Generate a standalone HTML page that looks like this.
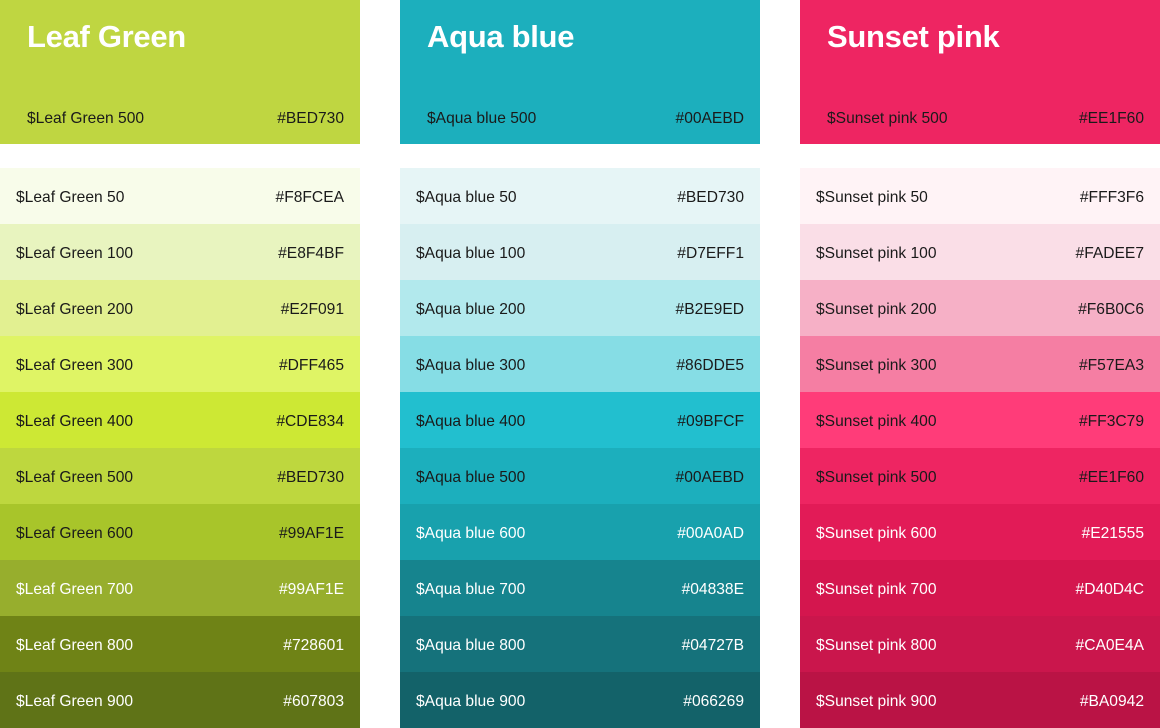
<!DOCTYPE html>
<html><head><meta charset="utf-8"><style>
*{margin:0;padding:0;box-sizing:border-box}
body{width:1160px;height:728px;background:#fff;font-family:"Liberation Sans",Arial,sans-serif;position:relative;overflow:hidden}
.col{position:absolute;top:0;width:360px}
.head{height:144px;position:relative;color:#fff}
.head h1{position:absolute;left:27px;top:19px;font-size:31px;font-weight:bold;letter-spacing:-0.3px}
.head .l{position:absolute;left:27px;right:16px;top:110px;display:flex;justify-content:space-between;font-size:15.6px;color:#1a1a1a}
.rows{margin-top:24px}
.r{height:56px;display:flex;justify-content:space-between;align-items:center;padding:3px 16px 0;font-size:15.6px;color:#1a1a1a}
.w{color:#fff}
</style></head><body>
<div class="col" style="left:0">
<div class="head" style="background:#bfd641"><h1>Leaf Green</h1><div class="l"><span>$Leaf Green 500</span><span>#BED730</span></div></div>
<div class="rows">
<div class="r" style="background:#f8fcea"><span>$Leaf Green 50</span><span>#F8FCEA</span></div>
<div class="r" style="background:#e8f4bf"><span>$Leaf Green 100</span><span>#E8F4BF</span></div>
<div class="r" style="background:#e2f091"><span>$Leaf Green 200</span><span>#E2F091</span></div>
<div class="r" style="background:#dff465"><span>$Leaf Green 300</span><span>#DFF465</span></div>
<div class="r" style="background:#cde834"><span>$Leaf Green 400</span><span>#CDE834</span></div>
<div class="r" style="background:#bed73e"><span>$Leaf Green 500</span><span>#BED730</span></div>
<div class="r" style="background:#a8c52a"><span>$Leaf Green 600</span><span>#99AF1E</span></div>
<div class="r w" style="background:#97ae2d"><span>$Leaf Green 700</span><span>#99AF1E</span></div>
<div class="r w" style="background:#6f8316"><span>$Leaf Green 800</span><span>#728601</span></div>
<div class="r w" style="background:#5f7317"><span>$Leaf Green 900</span><span>#607803</span></div>
</div></div>
<div class="col" style="left:400px">
<div class="head" style="background:#1cafbd"><h1>Aqua blue</h1><div class="l"><span>$Aqua blue 500</span><span>#00AEBD</span></div></div>
<div class="rows">
<div class="r" style="background:#e6f5f6"><span>$Aqua blue 50</span><span>#BED730</span></div>
<div class="r" style="background:#d7eff1"><span>$Aqua blue 100</span><span>#D7EFF1</span></div>
<div class="r" style="background:#b2e9ed"><span>$Aqua blue 200</span><span>#B2E9ED</span></div>
<div class="r" style="background:#86dde5"><span>$Aqua blue 300</span><span>#86DDE5</span></div>
<div class="r" style="background:#22bfcf"><span>$Aqua blue 400</span><span>#09BFCF</span></div>
<div class="r" style="background:#1cafbd"><span>$Aqua blue 500</span><span>#00AEBD</span></div>
<div class="r w" style="background:#18a1ad"><span>$Aqua blue 600</span><span>#00A0AD</span></div>
<div class="r w" style="background:#16848e"><span>$Aqua blue 700</span><span>#04838E</span></div>
<div class="r w" style="background:#15727b"><span>$Aqua blue 800</span><span>#04727B</span></div>
<div class="r w" style="background:#136269"><span>$Aqua blue 900</span><span>#066269</span></div>
</div></div>
<div class="col" style="left:800px">
<div class="head" style="background:#ee2562"><h1>Sunset pink</h1><div class="l"><span>$Sunset pink 500</span><span>#EE1F60</span></div></div>
<div class="rows">
<div class="r" style="background:#fff3f6"><span>$Sunset pink 50</span><span>#FFF3F6</span></div>
<div class="r" style="background:#fadee7"><span>$Sunset pink 100</span><span>#FADEE7</span></div>
<div class="r" style="background:#f6b0c6"><span>$Sunset pink 200</span><span>#F6B0C6</span></div>
<div class="r" style="background:#f57ea3"><span>$Sunset pink 300</span><span>#F57EA3</span></div>
<div class="r" style="background:#ff3c79"><span>$Sunset pink 400</span><span>#FF3C79</span></div>
<div class="r" style="background:#ee2562"><span>$Sunset pink 500</span><span>#EE1F60</span></div>
<div class="r w" style="background:#e21b57"><span>$Sunset pink 600</span><span>#E21555</span></div>
<div class="r w" style="background:#d4164e"><span>$Sunset pink 700</span><span>#D40D4C</span></div>
<div class="r w" style="background:#ca164c"><span>$Sunset pink 800</span><span>#CA0E4A</span></div>
<div class="r w" style="background:#ba1345"><span>$Sunset pink 900</span><span>#BA0942</span></div>
</div></div>
</body></html>
